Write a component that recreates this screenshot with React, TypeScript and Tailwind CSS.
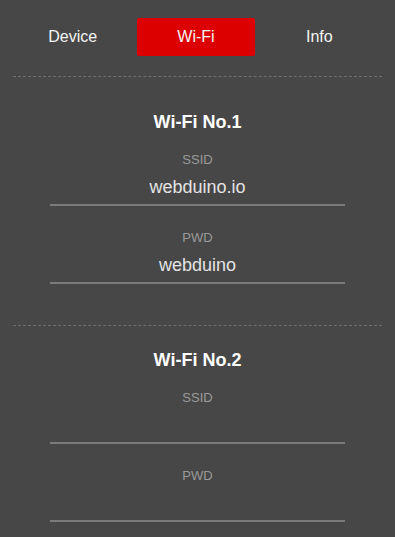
import React from 'react';

const tabs = ['Device', 'Wi-Fi', 'Info'];

interface WifiEntry {
  title: string;
  ssid: string;
  pwd: string;
}

const entries: WifiEntry[] = [
  { title: 'Wi-Fi No.1', ssid: 'webduino.io', pwd: 'webduino' },
  { title: 'Wi-Fi No.2', ssid: '', pwd: '' },
];

const Field = ({ label, value, first }: { label: string; value: string; first?: boolean }) => (
  <div className={first ? 'mt-[18px]' : 'mt-[24px]'}>
    <div className="h-[16px] text-center text-[13px] leading-[16px] text-[#9a9a9a]">{label}</div>
    <input
      readOnly
      value={value}
      className="block h-[38px] w-full border-b-2 border-[#7a7a7a] bg-transparent pt-[3px] text-center text-[18px] text-[#e4e4e4] outline-none"
    />
  </div>
);

export default function App() {
  return (
    <div className="min-h-[537px] w-full bg-[#474747] font-['Liberation_Sans',Arial,sans-serif]">
      {/* tab bar */}
      <nav className="grid grid-cols-3 pl-[11px] pr-[14px] pt-[18px]">
        {tabs.map((t) => (
          <button
            key={t}
            className={`mx-[3px] h-[38px] rounded-[2px] text-[16px] text-[#f4f4f4] ${
              t === 'Wi-Fi' ? 'bg-[#dd0000]' : 'bg-transparent'
            }`}
          >
            {t}
          </button>
        ))}
      </nav>

      {entries.map((e, i) => (
        <section key={e.title}>
          <div className={`mx-[13px] border-t border-dashed border-[#6e6e6e] ${i === 0 ? 'mt-[20px]' : 'mt-[41px]'}`} />
          <div className={`mx-auto w-[295px] ${i === 0 ? 'pt-[33px]' : 'pt-[22px]'}`}>
            <h2 className="h-[24px] text-center text-[18px] font-bold leading-[24px] text-white">{e.title}</h2>
            <Field label="SSID" value={e.ssid} first />
            <Field label="PWD" value={e.pwd} />
          </div>
        </section>
      ))}
    </div>
  );
}
